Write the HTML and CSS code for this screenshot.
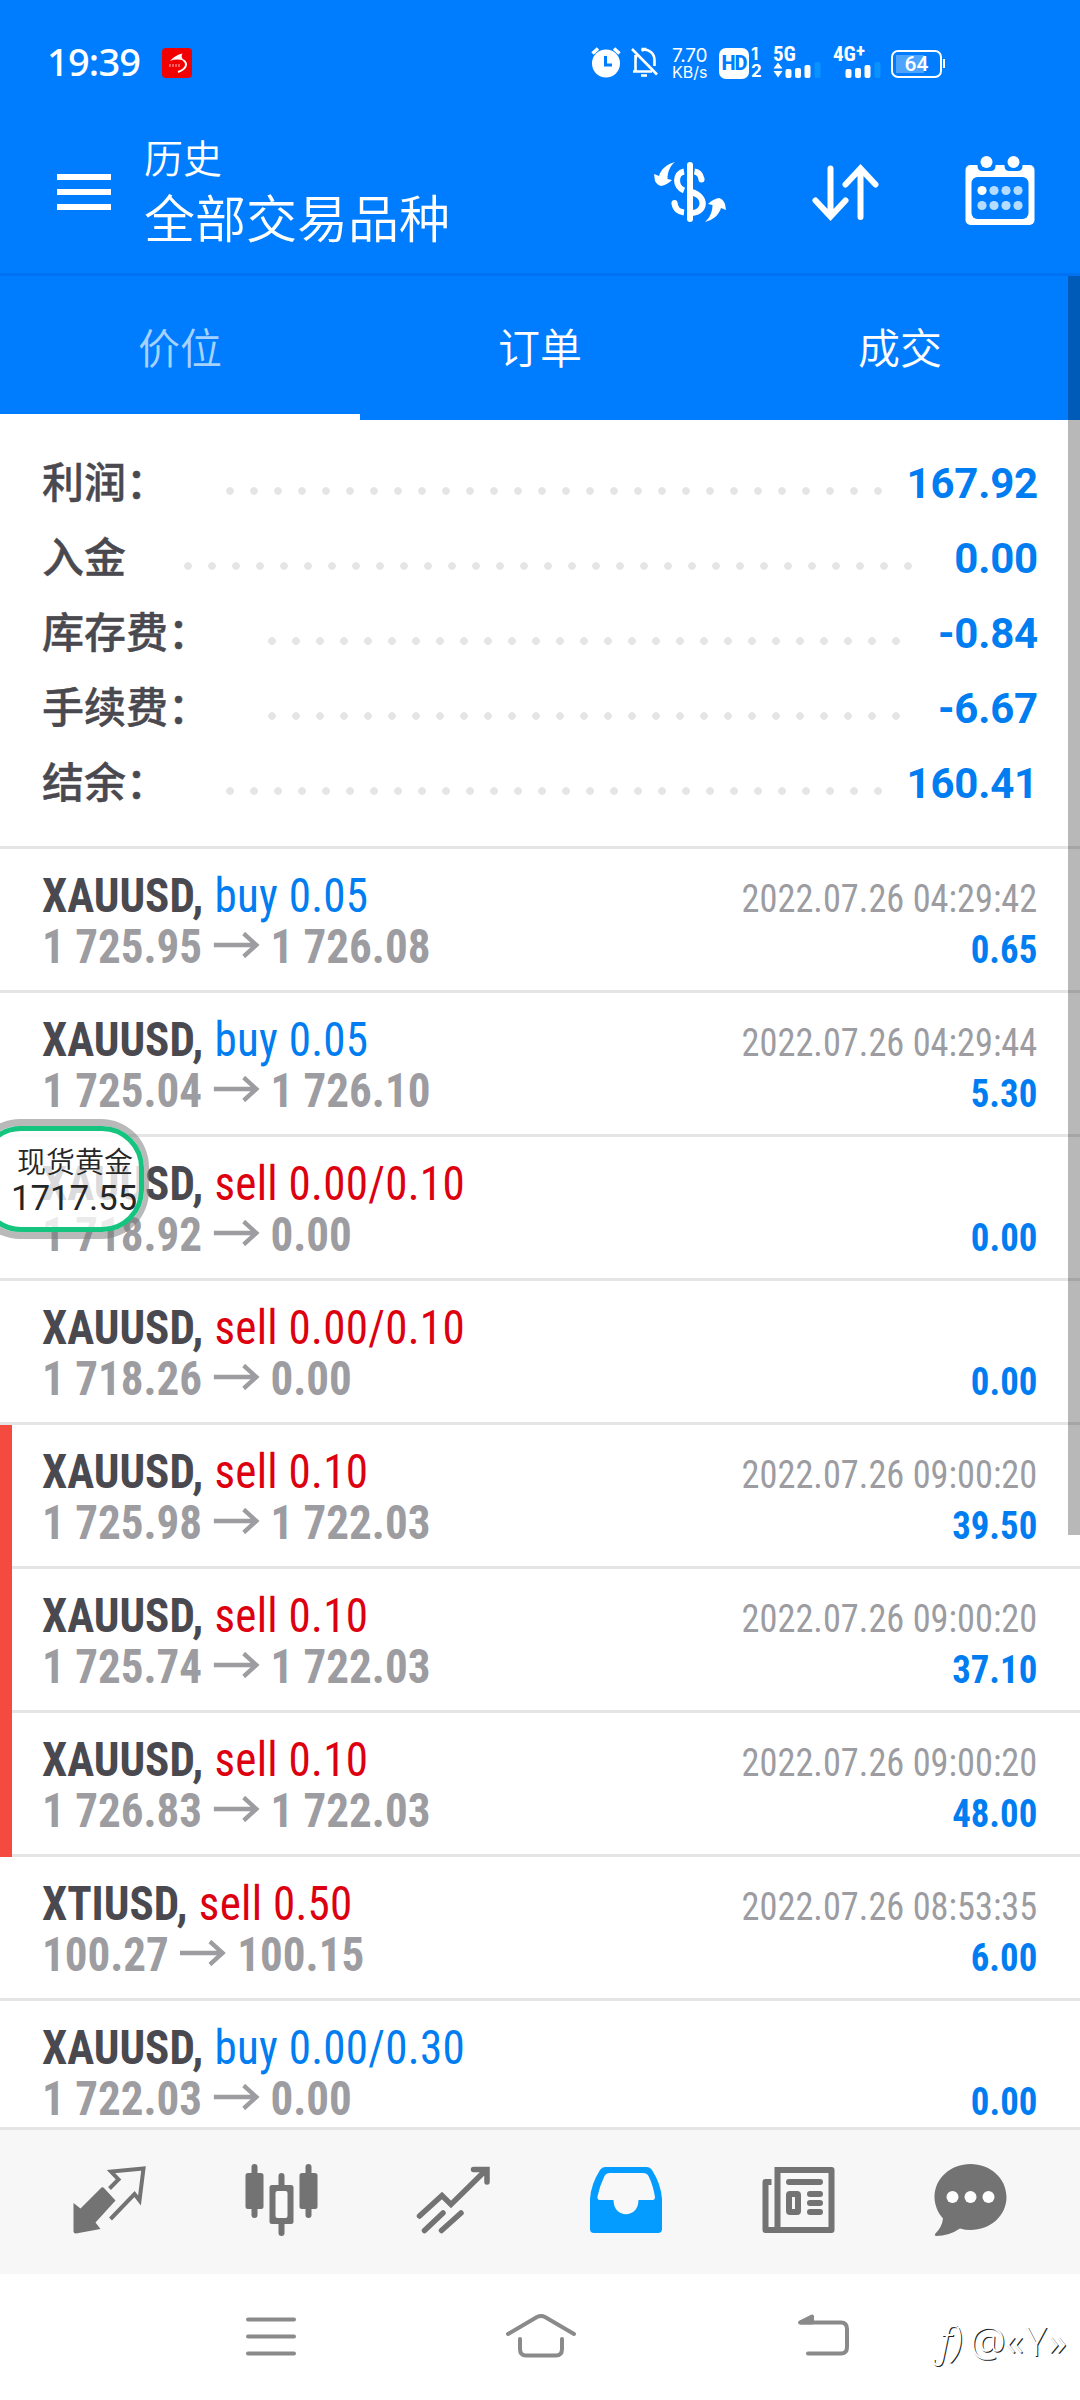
FILE: index.html
```html
<!DOCTYPE html>
<html lang="zh-CN">
<head>
<meta charset="utf-8">
<title>历史</title>
<link rel="stylesheet" href="styles.css">
</head>
<body>
<div class="screen">
  <header class="header">
    <div class="status">
      <span class="clock">19:39</span>
      <svg class="app-badge" width="32" height="32" viewBox="0 0 32 32"><rect x="1" y="1" width="30" height="30" rx="4" fill="#f00000"/><path d="M9 14Q14 8 21.500 6.500L20.500 9Q21 12 23 13.500Q15 11.500 9 14Z" fill="#fff"/><path d="M22 13C27 16 26 22 17 25" fill="none" stroke="#fff" stroke-width="2"/><path d="M9 17v3M12 17v3M15 17v3M18 17v3" stroke="#fbb" stroke-width="1"/></svg>
      <div class="status-right">
        <svg width="30" height="32" viewBox="0 0 30 32"><circle cx="15" cy="17.500" r="14" fill="#fff"/><path d="M1.500 7.500L7 2.500M28.500 7.500L23 2.500" stroke="#fff" stroke-width="3.500"/><path d="M14.500 10v9h6.500" fill="none" stroke="#007dff" stroke-width="3"/></svg>
        <svg class="bell" width="28" height="32" viewBox="0 0 28 32" fill="none" stroke="#fff" stroke-width="2.600"><path d="M1 3L26 28.500M4.500 9V25.500H21M4.500 14Q4.500 10 6.500 8M10.500 4.500C17 2 23.500 7 23.500 14V20M2 25.500H5"/><path d="M10 29.500h6M10.500 3h5" stroke-width="2.500"/></svg>
        <div class="speed"><span>7.70</span><span>KB/s</span></div>
        <div class="hd">HD</div>
        <div class="sims"><span>1</span><span>2</span></div>
        <div class="net net-5g"><span>5G</span>
          <svg width="48" height="17" viewBox="0 0 48 17" fill="#fff"><path d="M0.500 6.500L5 0.500L9.500 6.500ZM0.500 9L5 15.500L9.500 9Z"/><rect x="12.500" y="7" width="6" height="9" rx="2"/><rect x="22" y="6" width="6" height="10" rx="2"/><rect x="31.500" y="3" width="6" height="13" rx="2"/><rect x="41.500" y="0" width="6" height="16" rx="2" fill="#0a93ff"/></svg>
        </div>
        <div class="net net-4g"><span>4G<sup>+</sup></span>
          <svg width="48" height="17" viewBox="0 0 48 17" fill="#fff"><rect x="12.500" y="7" width="6" height="9" rx="2"/><rect x="22" y="6" width="6" height="10" rx="2"/><rect x="31.500" y="3" width="6" height="13" rx="2"/><rect x="41.500" y="0" width="6" height="16" rx="2" fill="#0a93ff"/></svg>
        </div>
        <div class="battery"><span>64</span></div>
        <i class="battery-cap"></i>
      </div>
    </div>
    <div class="toolbar">
      <svg class="burger" width="54" height="36" viewBox="0 0 54 36" fill="#fff"><path d="M0 0h54v6H0zM0 15h54v6H0zM0 30h54v6H0z"/></svg>
      <div class="titles"><span class="title-small">历史</span><span class="title-big">全部交易品种</span></div>
      <svg class="ic-dollar" width="74" height="62" viewBox="0 0 74 62" fill="#fff">
        <rect x="34" y="1" width="6" height="60" rx="3"/>
        <path d="M31 10.500C22 12 21.500 26 31 29.500M41.500 10.500C45 11 47.500 13 48.500 18M21.500 42C22 48 26 51 31 51.500" fill="none" stroke="#fff" stroke-width="6"/>
        <path d="M39 28C58 33 57 54 39 55V49C49 49 49 36 39 35Z"/>
        <circle cx="48.500" cy="18.500" r="3"/><circle cx="21.500" cy="42" r="3"/>
        <path d="M22 1C14 3 8 8 6 15L1 13L2 20Q4 24 8 25Q14 24 19 19L14.500 18C14.500 11 17 5 22 1Z"/>
        <path d="M52 61C60 59 66 54 68 47L73 49L72 43Q70 38 66 37Q60 38 55 43L59.500 44C59.500 50 57 57 52 61Z"/>
      </svg>
      <svg class="ic-sort" width="68" height="58" viewBox="0 0 68 58" fill="none" stroke="#fff" stroke-width="6" stroke-linecap="round"><path d="M18.500 4.500V52M3.500 36.500L18.500 52.500L33.500 36.500M48.500 53V6M33.500 20.500L48.500 4.500L63.500 20.500"/></svg>
      <svg class="ic-cal" width="70" height="70" viewBox="0 0 70 70">
        <rect x="0.500" y="9" width="69" height="60" rx="5" fill="#fff"/>
        <rect x="6.500" y="21" width="57" height="42" rx="6" fill="#007dff"/>
        <path d="M12.500 8v2q0 5 5 5h8q5 0 5-5V8ZM39.500 8v2q0 5 5 5h8q5 0 5-5V8Z" fill="#007dff"/>
        <circle cx="21.500" cy="6" r="6" fill="#fff"/><circle cx="48.500" cy="6" r="6" fill="#fff"/>
        <circle cx="17" cy="34.500" r="4.600" fill="#fff"/>
        <g fill="#b3dcff"><circle cx="29" cy="34.500" r="4.600"/><circle cx="41" cy="34.500" r="4.600"/><circle cx="53" cy="34.500" r="4.600"/><circle cx="17" cy="49.500" r="4.600"/><circle cx="29" cy="49.500" r="4.600"/><circle cx="41" cy="49.500" r="4.600"/><circle cx="53" cy="49.500" r="4.600"/></g>
      </svg>
    </div>
    <nav class="tabs"><span class="tab active">价位</span><span class="tab">订单</span><span class="tab">成交</span></nav>
  </header>

  <main class="content">
    <section class="summary">
      <div class="sum"><span>利润：</span><i class="dots" style="width:672px"></i><b>167.92</b></div>
      <div class="sum"><span>入金</span><i class="dots" style="width:744px"></i><b>0.00</b></div>
      <div class="sum"><span>库存费：</span><i class="dots" style="width:648px"></i><b>-0.84</b></div>
      <div class="sum"><span>手续费：</span><i class="dots" style="width:648px"></i><b>-6.67</b></div>
      <div class="sum"><span>结余：</span><i class="dots" style="width:672px"></i><b>160.41</b></div>
    </section>

    <section class="deals">
      <div class="deal"><div class="l"><div class="name">XAUUSD, <span class="buy">buy 0.05</span></div><div class="price">1 725.95<svg class="arrow" viewBox="0 0 49 26"><path d="M0 13h46M32 1.500L45.500 13L32 24.500"/></svg>1 726.08</div></div><div class="r"><div class="date">2022.07.26 04:29:42</div><div class="val">0.65</div></div></div>
      <div class="deal"><div class="l"><div class="name">XAUUSD, <span class="buy">buy 0.05</span></div><div class="price">1 725.04<svg class="arrow" viewBox="0 0 49 26"><path d="M0 13h46M32 1.500L45.500 13L32 24.500"/></svg>1 726.10</div></div><div class="r"><div class="date">2022.07.26 04:29:44</div><div class="val">5.30</div></div></div>
      <div class="deal"><div class="l"><div class="name">XAUUSD, <span class="sell">sell 0.00/0.10</span></div><div class="price">1 718.92<svg class="arrow" viewBox="0 0 49 26"><path d="M0 13h46M32 1.500L45.500 13L32 24.500"/></svg>0.00</div></div><div class="r"><div class="date"></div><div class="val">0.00</div></div></div>
      <div class="deal"><div class="l"><div class="name">XAUUSD, <span class="sell">sell 0.00/0.10</span></div><div class="price">1 718.26<svg class="arrow" viewBox="0 0 49 26"><path d="M0 13h46M32 1.500L45.500 13L32 24.500"/></svg>0.00</div></div><div class="r"><div class="date"></div><div class="val">0.00</div></div></div>
      <div class="deal marked"><div class="l"><div class="name">XAUUSD, <span class="sell">sell 0.10</span></div><div class="price">1 725.98<svg class="arrow" viewBox="0 0 49 26"><path d="M0 13h46M32 1.500L45.500 13L32 24.500"/></svg>1 722.03</div></div><div class="r"><div class="date">2022.07.26 09:00:20</div><div class="val">39.50</div></div></div>
      <div class="deal marked"><div class="l"><div class="name">XAUUSD, <span class="sell">sell 0.10</span></div><div class="price">1 725.74<svg class="arrow" viewBox="0 0 49 26"><path d="M0 13h46M32 1.500L45.500 13L32 24.500"/></svg>1 722.03</div></div><div class="r"><div class="date">2022.07.26 09:00:20</div><div class="val">37.10</div></div></div>
      <div class="deal marked"><div class="l"><div class="name">XAUUSD, <span class="sell">sell 0.10</span></div><div class="price">1 726.83<svg class="arrow" viewBox="0 0 49 26"><path d="M0 13h46M32 1.500L45.500 13L32 24.500"/></svg>1 722.03</div></div><div class="r"><div class="date">2022.07.26 09:00:20</div><div class="val">48.00</div></div></div>
      <div class="deal"><div class="l"><div class="name">XTIUSD, <span class="sell">sell 0.50</span></div><div class="price">100.27<svg class="arrow" viewBox="0 0 49 26"><path d="M0 13h46M32 1.500L45.500 13L32 24.500"/></svg>100.15</div></div><div class="r"><div class="date">2022.07.26 08:53:35</div><div class="val">6.00</div></div></div>
      <div class="deal"><div class="l"><div class="name">XAUUSD, <span class="buy">buy 0.00/0.30</span></div><div class="price">1 722.03<svg class="arrow" viewBox="0 0 49 26"><path d="M0 13h46M32 1.500L45.500 13L32 24.500"/></svg>0.00</div></div><div class="r"><div class="date"></div><div class="val">0.00</div></div></div>
    </section>
  </main>

  <nav class="bottom">
    <svg viewBox="0 0 74 74" fill="#737373"><path d="M1.500 40L8.500 45.500L29.500 24.500Q31 24 32 25L43.500 37.500L23.500 59.500L28.500 66L4 70.500Q1.500 70.500 1.500 68Z"/><path d="M37.500 25.500L46.500 16.500L39 8.500L71.500 5.500L67.500 37.500L62.500 31L38.500 56" fill="none" stroke="#737373" stroke-width="4"/></svg>
    <svg viewBox="0 0 74 74" fill="#737373"><rect x="7.500" y="1" width="6" height="54" rx="3"/><rect x="1.500" y="10" width="18" height="36" rx="2.500"/><rect x="61.500" y="1" width="6" height="54" rx="3"/><rect x="55.500" y="10" width="18" height="36" rx="2.500"/><rect x="34.500" y="10" width="6" height="63" rx="3"/><rect x="25.500" y="22" width="24" height="39" rx="2.500"/><rect x="31.500" y="28" width="12" height="27" rx="2" fill="#f9f9f9"/></svg>
    <svg viewBox="0 0 74 74" fill="none" stroke="#737373" stroke-width="5.500" stroke-linecap="round"><path d="M3.500 53L26 32.500L35 41.500L69 8M57.500 6.500H71V19"/><path d="M8.500 67.500L27 50M25.500 67.500L45 50"/></svg>
    <svg viewBox="0 0 74 74"><path d="M16 4H58Q61 4 63 7Q72 21 73 36V66Q73 70 69 70H5Q1 70 1 66V36Q2 21 11 7Q13 4 16 4Z" fill="#049cff"/><path d="M21 10H54Q58 10 59.500 13Q64 22 66 34Q66 37 63.500 37H49.500C49.500 56 24.500 56 24.500 37H11Q8 37 8.500 33.500Q11 22 15.500 13Q17 10 21 10Z" fill="#f8f8f8"/></svg>
    <svg viewBox="0 0 74 74" fill="none" stroke="#737373" stroke-width="6"><path d="M16.500 7H70.500V67H4.500V19H10.500M16.500 4V67" stroke-linejoin="round"/><path d="M28 19H59M49 31H59M49 40H59M49 49H59" stroke-linecap="round"/><rect x="28" y="31" width="9" height="18" rx="1"/></svg>
    <svg viewBox="0 0 74 74" fill="#737373"><path d="M37.500 1C57 1 73.500 15 73.500 34S57 67 37.500 67Q32 67 27 65.500Q16 73 3 73Q1 72 2.500 70.500Q9 64 10 55.500C5 50 1.500 42 1.500 34C1.500 15 18 1 37.500 1Z"/><g fill="#fff"><circle cx="19.500" cy="34" r="6"/><circle cx="37.500" cy="34" r="6"/><circle cx="55.500" cy="34" r="6"/></g></svg>
  </nav>

  <div class="sysnav">
    <svg width="270" height="50" viewBox="0 0 270 50"><path d="M112 7.500h46M112 24.500h46M112 41.500h46"/></svg>
    <svg width="270" height="50" viewBox="0 0 270 50"><path d="M102 22L131 5Q135 3 139 5L168 22M114 27V37Q114 43.500 120 43.500H150Q156 43.500 156 37V27"/></svg>
    <svg width="270" height="50" viewBox="0 0 270 50"><path d="M132 41.500H165Q171 41.500 171 35V17Q171 10.500 165 10.500H125"/><path d="M124 10.500L136 4.500V10.500Z" fill="#8a8a8a"/></svg>
  </div>

  <div class="scrollbar"></div>
  <div class="bubble"><div class="bubble-in"><span class="b1">现货黄金</span><span class="b2">1717.55</span></div></div>
  <div class="mark"><span class="mark-a">ƒ)</span>@<span class="mark-y">«Y»</span></div>
</div>
</body>
</html>
```
FILE: styles.css
```css
* { box-sizing: border-box; }
body { margin: 0; font-family: "Roboto", "Noto Sans CJK SC", sans-serif; }
.screen { position: relative; width: 1080px; height: 2400px; background: #fff; display: flex; flex-direction: column; overflow: hidden; }

.header { background: #007dff; color: #fff; height: 420px; display: flex; flex-direction: column; }
.status { height: 110px; padding: 46px 135px 0 47px; display: flex; align-items: flex-start; }
.clock { font: 500 38px/30px "Noto Sans", sans-serif; width: 114px; white-space: nowrap; letter-spacing: -.8px; }
.app-badge { margin-top: 1px; }
.status-right { margin-left: auto; display: flex; align-items: flex-start; height: 34px; }
.bell { margin-left: 10px; }
.speed { margin: 1px 0 0 13px; width: 47px; display: flex; flex-direction: column; font: 19px/17px "Inter", sans-serif; white-space: nowrap; }
.speed span:first-child { letter-spacing: -.2px; }
.speed span:last-child { font-size: 16px; line-height: 16px; }
.hd { width: 30px; height: 31px; margin-top: 2px; border-radius: 7px; background: #fff; color: #007dff; font: 800 20px/31px "Roboto", sans-serif; letter-spacing: -1px; text-align: center; }
.sims { margin: 0 0 0 2px; width: 11px; display: flex; flex-direction: column; font: 700 17px/17px "Inter", sans-serif; }
.net { width: 48px; display: flex; flex-direction: column; height: 33px; padding-top: 1px; font: 700 21px/15px "Roboto Condensed", sans-serif; white-space: nowrap; }
.net-5g { margin-left: 11px; }
.net-4g { margin-left: 12px; }
.net sup { font-size: 19px; line-height: 0; vertical-align: 4px; }
.net svg { display: block; }
.battery { margin: 4px 0 0 10px; width: 51px; height: 28px; border: 2px solid #fff; border-radius: 7px; background: linear-gradient(90deg, #4da4ff 0 28px, transparent 28px) 3px 3px / 40px 18px no-repeat; background-origin: padding-box; font: 500 21px/24px "Roboto", sans-serif; text-align: center; }
.battery-cap { width: 2px; height: 9px; margin: 13px 0 0 1px; background: #fff; }

.toolbar { height: 163px; padding: 0 45px 0 57px; display: flex; align-items: flex-start; }
.burger { margin-top: 64px; }
.titles { width: 509px; margin: 19px 0 0 33px; display: flex; flex-direction: column; font-family: "Noto Sans CJK SC", sans-serif; font-weight: 350; }
.title-small { font-size: 39px; line-height: 54px; }
.title-big { font-size: 51px; line-height: 66px; }
.ic-dollar { margin-top: 51px; }
.ic-sort { margin: 54px 0 0 85px; }
.ic-cal { margin: 46px 0 0 auto; }
.tabs { flex: 1; border-top: 3px solid #0071f0; display: flex; }
.tab { flex: 1; display: flex; align-items: center; justify-content: center; font: 350 42px/60px "Noto Sans CJK SC", sans-serif; border-bottom: 6px solid transparent; padding-top: 2px; }
.tab.active { color: #a6d2ff; border-color: #fff; }

.content { height: 1707px; overflow: hidden; }
.summary { height: 426px; padding-top: 25px; }
.sum { height: 75px; padding: 0 42px; display: flex; align-items: center; font-size: 42px; }
.sum span { font-family: "Noto Sans CJK SC", sans-serif; font-weight: 500; color: #4a494f; margin-right: 50px; padding-bottom: 7px; -webkit-text-stroke: .4px #4a494f; }
.sum b { margin-left: auto; color: #007df0; letter-spacing: -.2px; padding-top: 2px; }
.dots { height: 8px; margin-top: 16px; background: radial-gradient(circle at 12px 4px, #e5e5e5 3.500px, transparent 4.100px) 0 0 / 24px 8px repeat-x; }

.deal { height: 144px; padding: 21px 43px 0 42px; border-top: 3px solid #e5e5e5; display: flex; justify-content: space-between; font-family: "Roboto Condensed", "Roboto", sans-serif; white-space: nowrap; }
.deal.marked { background: linear-gradient(#f44a40, #f44a40) 0 0 / 12px 144px no-repeat; }
.marked + .deal { border-image: linear-gradient(90deg, #f44a40 12px, #e5e5e5 12px) 3 0 0 0; }
.l { transform: scaleX(.938); transform-origin: 0 0; }
.r { transform: scaleX(.932); transform-origin: 100% 0; text-align: right; }
.name, .price { font-size: 48px; line-height: 51px; height: 51px; font-weight: 700; }
.name { color: #4a494f; }
.name span { font-weight: 400; letter-spacing: .3px; margin-left: 1px; }
.buy { color: #007df0; }
.sell { color: #dc0010; }
.price { color: #9c9ca1; }
.arrow { width: 49px; height: 26px; margin: 0 12px 0 12px; vertical-align: 5px; fill: none; stroke: #9c9ca1; stroke-width: 4.500; }
.date { font-size: 39px; line-height: 51px; height: 51px; padding-top: 4px; color: #9c9ca1; }
.val { font-size: 39.500px; line-height: 51px; padding-top: 3px; font-weight: 700; color: #007df0; }

.bottom { height: 147px; background: #f7f7f7; border-top: 3px solid #e5e5e5; padding: 33px 73px 0 72px; display: flex; justify-content: space-between; }
.bottom svg { width: 74px; height: 74px; }
.sysnav { height: 126px; padding: 38px 0 0 136px; display: flex; }
.sysnav svg { fill: none; stroke: #8a8a8a; stroke-width: 4; stroke-linecap: round; stroke-linejoin: round; }

.scrollbar { position: absolute; left: 1068px; top: 276px; width: 12px; height: 1259px; background: rgba(0, 0, 0, .28); }
.bubble { position: absolute; left: -28px; top: 1119px; width: 177px; height: 120px; border-radius: 48px; border: 7px solid rgba(120, 120, 120, .52); border-right-width: 5px; }
.bubble-in { height: 106px; border: 5px solid #15c47e; border-radius: 42px; background: rgba(255, 255, 255, .8); color: #262626; display: flex; flex-direction: column; padding: 13px 0 0 33px; white-space: nowrap; }
.b1 { font: 350 29px/33px "Noto Sans CJK SC", sans-serif; }
.b2 { font: 35px/44px "Roboto", sans-serif; margin-left: -6px; letter-spacing: -.2px; }
.mark { position: absolute; left: 932px; top: 2316px; display: flex; font: 300 40px/50px "Noto Sans", sans-serif; color: #fff; text-shadow: 1px 1px 0 #222; white-space: nowrap; }
.mark-a { width: 38px; padding-left: 4px; font-style: italic; }
.mark-y { letter-spacing: 3px; }
```
